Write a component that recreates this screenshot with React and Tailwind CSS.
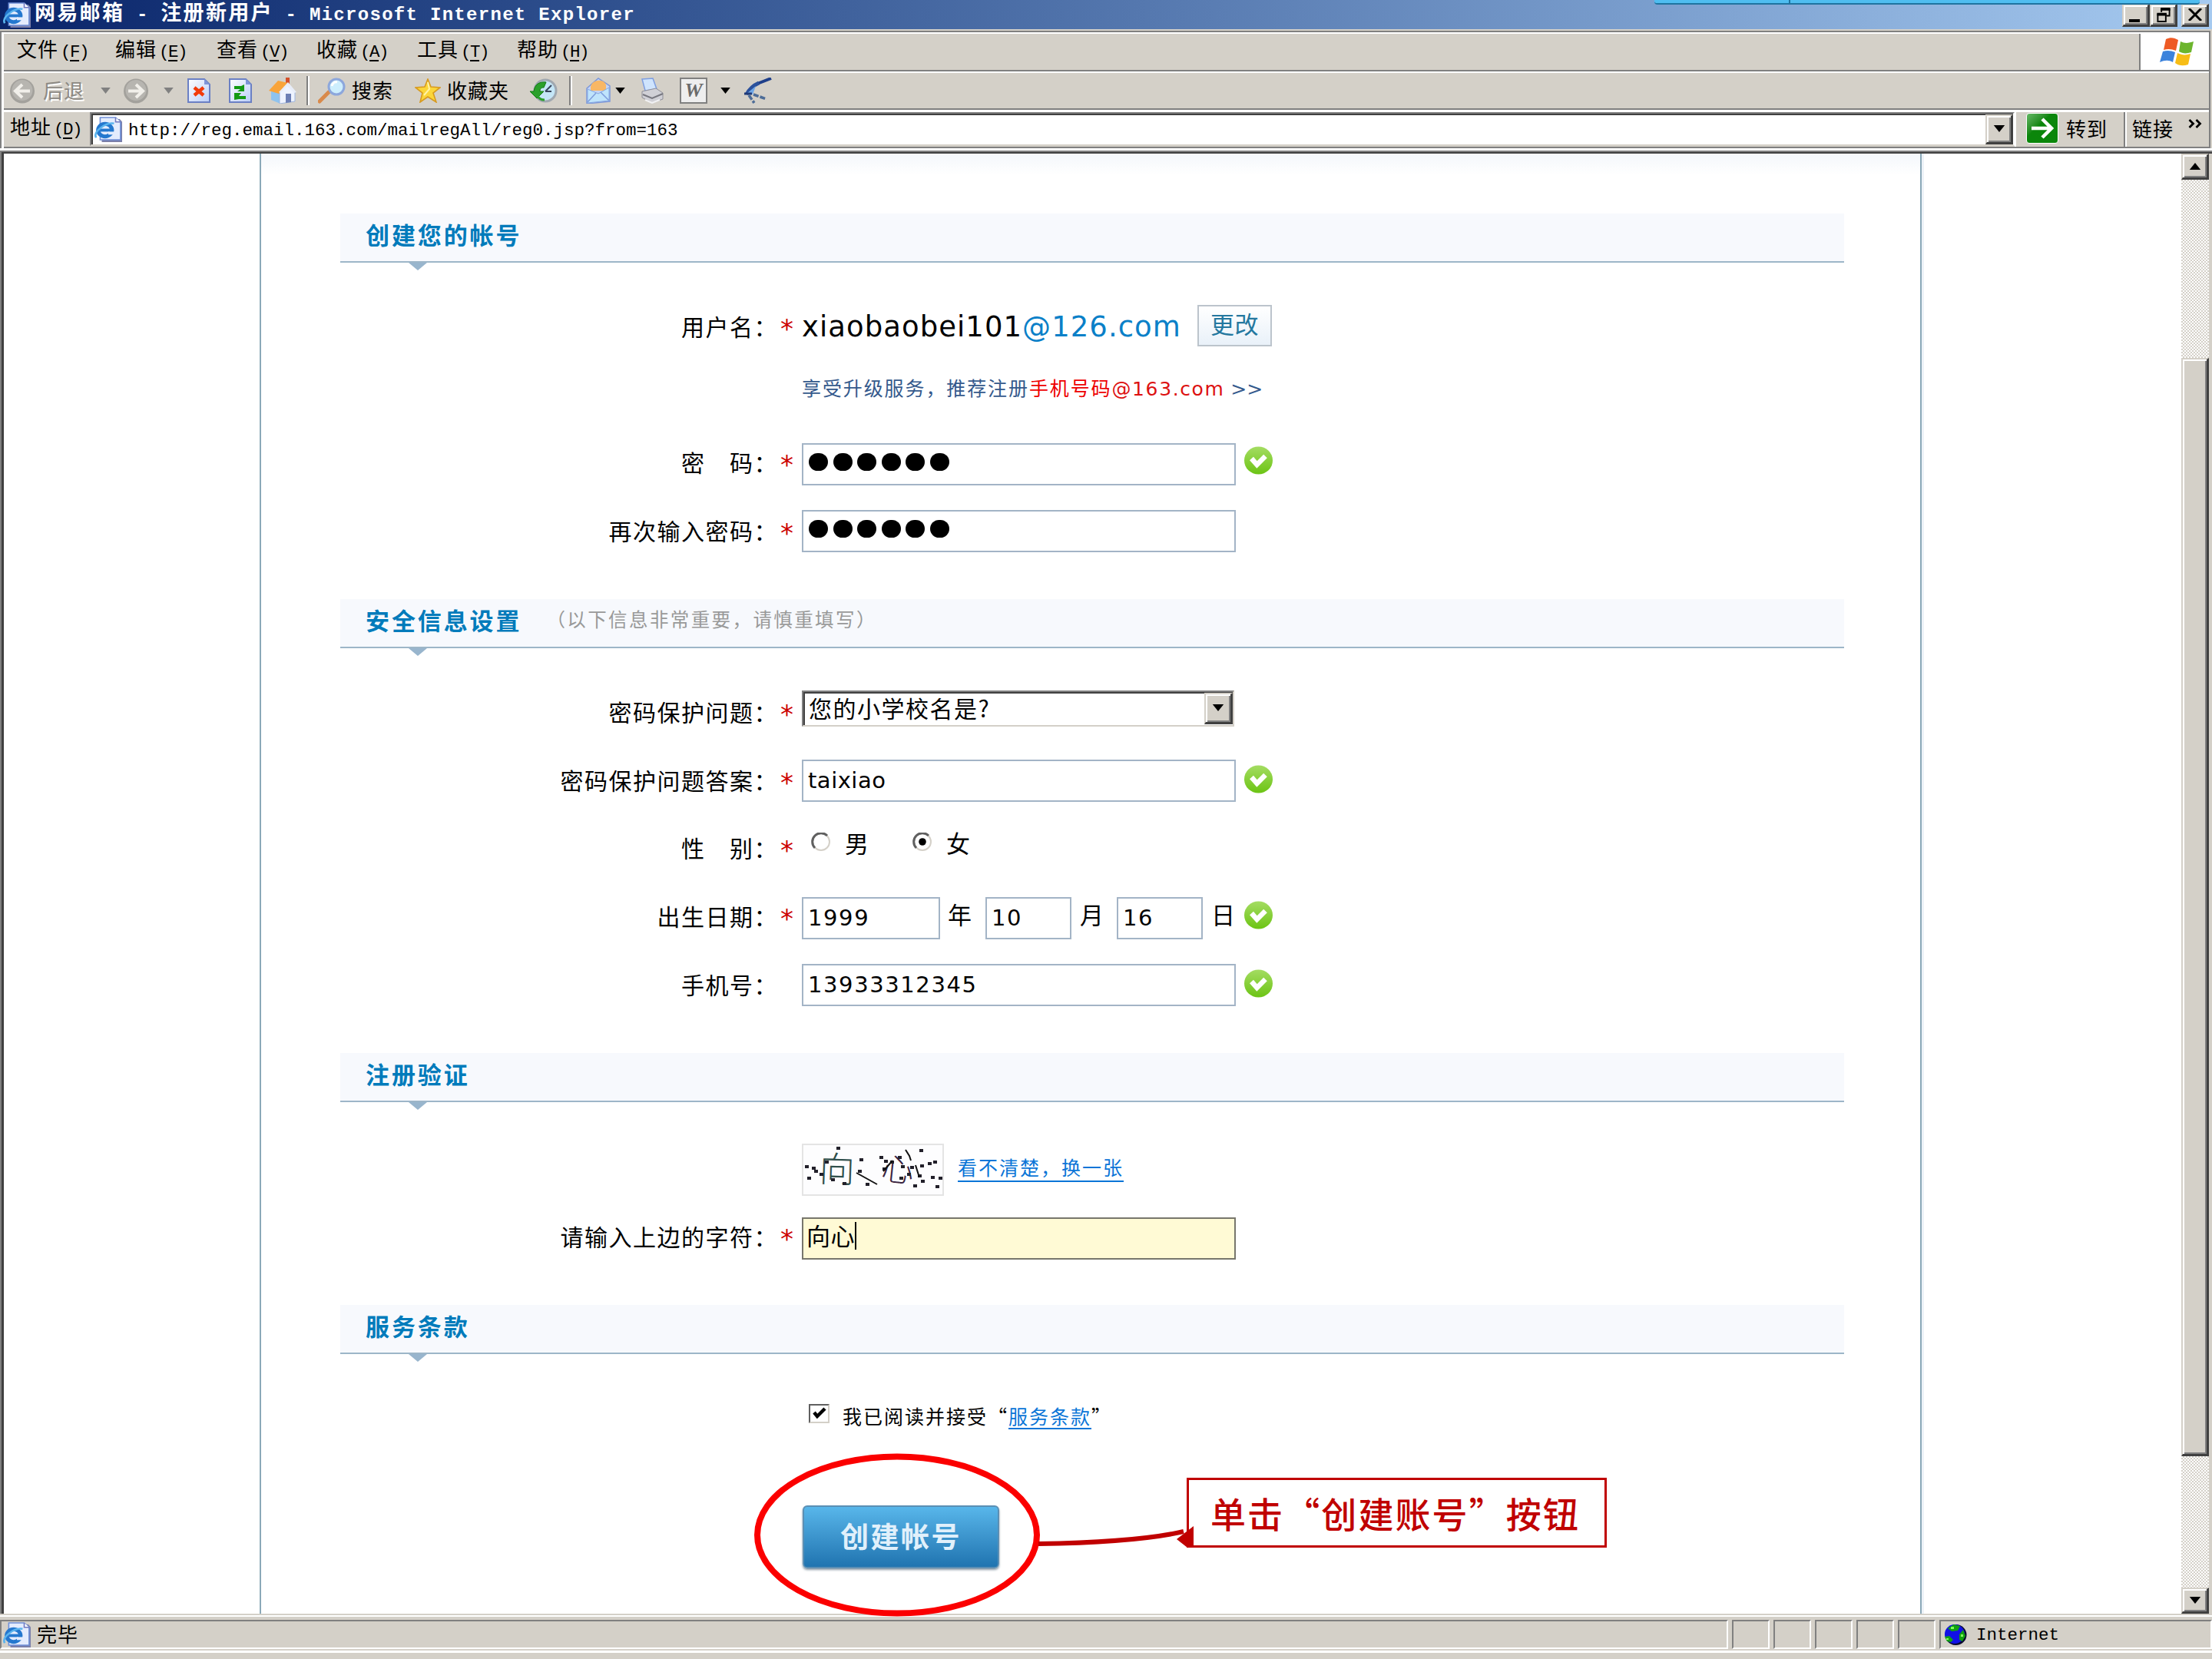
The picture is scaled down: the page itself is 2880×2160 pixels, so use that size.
import React from 'react';

const MONO = "font-['Liberation_Mono','Noto_Sans_CJK_SC',monospace]";
const CJK = "font-['Noto_Sans_CJK_SC',sans-serif]";
const VERDANA = "font-['DejaVu_Sans','Noto_Sans_CJK_SC',sans-serif]";

const MENUS = [
  { name: '文件', key: 'F', width: 'w-[128px]' },
  { name: '编辑', key: 'E', width: 'w-[132px]' },
  { name: '查看', key: 'V', width: 'w-[130px]' },
  { name: '收藏', key: 'A', width: 'w-[131px]' },
  { name: '工具', key: 'T', width: 'w-[130px]' },
  { name: '帮助', key: 'H', width: 'w-[130px]' },
];

const IEIcon = ({ className = 'w-[34px] h-[34px]' }) => (
  <svg viewBox="0 0 34 34" preserveAspectRatio="none" className={`shrink-0 ${className}`}>
    <path d="M9 3h22l4 5v26H9z" fill="#7b7fa8" />
    <path d="M7 1h19l6 6v24H7z" fill="#e4ecfd" stroke="#6f8fd8" strokeWidth="1.5" />
    <path d="M26 1v6h6" fill="#fff" stroke="#6f78c0" strokeWidth="1.5" />
    <circle cx="13" cy="18" r="8.5" fill="none" stroke="#2478cf" strokeWidth="5" />
    <path d="M7 18h15" stroke="#2478cf" strokeWidth="4" />
    <path d="M17 20h8v4h-8z" fill="#e4ecfd" />
    <path d="M2 28C-2 20 14 7 24 9" fill="none" stroke="#5ab4ee" strokeWidth="2.5" />
  </svg>
);

const RoundArrow = ({ flip }) => (
  <svg viewBox="0 0 34 33" className={`w-[34px] h-[33px] shrink-0 ${flip ? '-scale-x-100' : ''}`}>
    <circle cx="17" cy="16.5" r="16" fill="#a3a19c" />
    <circle cx="17" cy="15.5" r="13.5" fill="#b7b5b0" />
    <path d="M27 16.5H9M17 8l-9 8.5 9 8.5" fill="none" stroke="#f1efea" strokeWidth="4" />
  </svg>
);

const Caret = ({ className }) => (
  <svg viewBox="0 0 14 9" className={`w-[13px] h-[8px] shrink-0 ${className}`}>
    <path d="M0 0h14L7 9z" fill="currentColor" />
  </svg>
);

const PageSheet = ({ children }) => (
  <svg viewBox="0 0 30 32" className="w-[30px] h-[32px] shrink-0">
    <defs>
      <linearGradient id="sheet" x1="0" y1="0" x2="1" y2="1">
        <stop offset="0" stopColor="#ffffff" />
        <stop offset="1" stopColor="#b9cdf8" />
      </linearGradient>
    </defs>
    <path d="M1 1h21l7 7v23H1z" fill="url(#sheet)" stroke="#6b80c4" strokeWidth="2" />
    <path d="M22 1v7h7z" fill="#7f95d8" />
    {children}
  </svg>
);

const HomeIcon = () => (
  <svg viewBox="0 0 36 34" className="w-[36px] h-[34px] shrink-0 ml-[22px]">
    <path d="M3 18v11l12 5V18z" fill="#8fc3ee" />
    <path d="M14 20l10-10 10 9v12l-20 3z" fill="#eef3ff" stroke="#9db4dd" />
    <path d="M22 21h7v11l-7 1z" fill="#6d7fb5" />
    <path d="M22 0h5v9h-5z" fill="#d4502a" />
    <path d="M0 17L12 4l13 3-12 14z" fill="#f9a43a" />
    <path d="M25 6l11 13-3 1-9-9-9 9-2-1z" fill="#e8edf8" />
  </svg>
);

const SearchIcon = () => (
  <svg viewBox="0 0 36 34" className="w-[36px] h-[34px] shrink-0 ml-[11px]">
    <path d="M2 31l12-12" stroke="#d98a4b" strokeWidth="5" strokeLinecap="round" />
    <circle cx="24" cy="12" r="10" fill="#cdeefd" stroke="#8da7dc" strokeWidth="3" />
    <path d="M18 11c1-4 4-6 7-5" fill="none" stroke="#fff" strokeWidth="3" />
  </svg>
);

const StarIcon = () => (
  <svg viewBox="0 0 34 32" className="w-[34px] h-[32px] shrink-0 ml-[26px]">
    <path
      d="M17 1l4 10 12 1-9 7 4 12-11-7-10 7 3-12-9-7 12-1z"
      fill="#fbd63a"
      stroke="#d79a20"
      strokeWidth="1.6"
    />
    <path d="M17 5l2 9-7 8" fill="none" stroke="#fff3a8" strokeWidth="2" />
  </svg>
);

const HistoryIcon = () => (
  <svg viewBox="0 0 36 32" className="w-[36px] h-[32px] shrink-0 ml-[26px]">
    <circle cx="20" cy="16" r="14" fill="#c4e6f7" stroke="#a0a8b0" strokeWidth="3" />
    <path d="M20 17l8-8M20 17h8" stroke="#39455c" strokeWidth="2" />
    <path d="M0 17h5C6 8 12 4 21 5l-3 7c-4 0-5 2-5 5h5l-9 9z" fill="#2ba02b" stroke="#137a13" />
    <path d="M10 23c2 4 5 5 9 5" fill="none" stroke="#2ba02b" strokeWidth="3" />
  </svg>
);

const MailIcon = () => (
  <svg viewBox="0 0 32 34" className="w-[32px] h-[34px] shrink-0 ml-[18px]">
    <path d="M1 14L16 1l15 10v20L1 34z" fill="#c4d3f4" stroke="#7e98d8" strokeWidth="1.5" />
    <path d="M6 12c2-10 18-11 20-2v7H6z" fill="#f8b765" />
    <path d="M2 15l14 6 14-8v17L2 33z" fill="#bfe4fc" stroke="#86a9e2" />
    <path d="M2 32l11-12M30 30L19 19" stroke="#7f9ddc" strokeWidth="1.5" />
  </svg>
);

const PrinterIcon = () => (
  <svg viewBox="0 0 32 34" className="w-[32px] h-[34px] shrink-0 ml-[19px]">
    <path d="M3 2l14-1 5 14-15 2z" fill="#cfe4fd" stroke="#7e9ee0" strokeWidth="1.5" />
    <path d="M3 18l18-4 9 6v8l-14 5-13-7z" fill="#d0d0d6" stroke="#8f8f98" />
    <path d="M4 22l12 5 14-6" fill="none" stroke="#77777f" strokeWidth="2" />
    <path d="M7 29l9 4 10-4" fill="none" stroke="#f2f2f4" strokeWidth="2" />
  </svg>
);

const DiscussIcon = () => (
  <svg viewBox="0 0 38 34" className="w-[38px] h-[34px] shrink-0 ml-[16px]">
    <path d="M37 1L19 8" stroke="#1f3f8a" strokeWidth="4" />
    <path d="M21 7C12 11 8 16 5 22" fill="none" stroke="#2b519c" strokeWidth="5" />
    <path d="M17 11L5 21l8 1z" fill="#6fa6e6" />
    <path d="M2 21h10" stroke="#1f3a78" strokeWidth="3" />
    <path d="M8 23l7 10M14 22l17 6" stroke="#4d6c97" strokeWidth="3.500" strokeDasharray="7 2" />
  </svg>
);

const WindowsFlag = () => (
  <svg viewBox="0 0 46 38" className="w-[46px] h-[38px]">
    <path d="M9 2c6-3 11-2 16 1l-3 14c-5-2-10-3-16-1z" fill="#ee5a24" />
    <path d="M28 5c6 3 11 2 17 0l-3 14c-6 2-11 2-16-1z" fill="#6cb52d" />
    <path d="M5 18c6-2 11-1 16 1l-3 13c-5-3-10-3-17 0z" fill="#3c83dc" />
    <path d="M24 20c6 3 11 3 17 1l-3 14c-6 2-12 2-17-2z" fill="#f7bd16" />
  </svg>
);

const Globe = () => (
  <svg viewBox="0 0 30 28" className="w-[30px] h-[28px] shrink-0">
    <ellipse cx="15.500" cy="14.500" rx="14" ry="13.500" fill="#0a0a30" />
    <ellipse cx="14" cy="13.500" rx="13" ry="12.500" fill="#1111e6" />
    <path d="M5 6l8-5 8 2-3 6-8 1zM20 14l5-6 3 8-4 7-4-2zM1 17l6-1 5 5-3 3-5-1z" fill="#11a011" />
    <path d="M9 4h4v3H9zM22 14h3v3h-3zM3 19h3v2H3z" fill="#7dff5a" />
  </svg>
);

const OkIcon = ({ className = '' }) => (
  <svg viewBox="0 0 38 37" className={`w-[39px] h-[37px] shrink-0 ${className}`}>
    <defs>
      <linearGradient id="ok" x1="0" y1="0" x2="0" y2="1">
        <stop offset="0" stopColor="#a4dc62" />
        <stop offset="1" stopColor="#6cc414" />
      </linearGradient>
    </defs>
    <ellipse cx="19" cy="18.500" rx="18.500" ry="18" fill="url(#ok)" />
    <path d="M10 16l7 8 11-11" fill="none" stroke="#fff" strokeWidth="6.500" />
  </svg>
);

// raised 3D button face of the classic Windows theme
const Raised = ({ className, children }) => (
  <div
    className={`flex items-center justify-center shrink-0 bg-[#d4d0c8] border-t-2 border-l-2 border-r-[3px] border-b-[3px] border-t-[#d4d0c8] border-l-[#d4d0c8] border-r-[#404040] border-b-[#404040] shadow-[inset_2px_2px_0_#fff,inset_-2px_-2px_0_#808080] ${className}`}
  >
    {children}
  </div>
);

const ToolSeparator = ({ className }) => (
  <div className={`w-[4px] h-[38px] shrink-0 border-l-2 border-[#808080] bg-white ${className}`} />
);

const TitleBar = () => (
  <div className="relative flex h-[38px] items-center bg-linear-to-r from-[#0a246a] to-[#a6caf0]">
    <IEIcon className="w-[36px] h-[33px] ml-1" />
    <div
      className={`${MONO} ml-[5px] flex items-baseline whitespace-pre text-[24px] leading-[38px] font-bold text-white`}
    >
      <span className="text-[27px] tracking-[2.3px]">网易邮箱</span>
      <span className="tracking-[1.3px]"> - </span>
      <span className="text-[27px] tracking-[2.3px]">注册新用户</span>
      <span className="tracking-[1.3px]"> - Microsoft Internet Explorer</span>
    </div>
    <div className="ml-auto flex pt-[1px] pr-[4px]">
      <Raised className="w-[36px] h-[30px]">
        <div className="mt-[16px] mr-1 h-[4px] w-[14px] bg-black" />
      </Raised>
      <Raised className="w-[36px] h-[30px]">
        <svg viewBox="0 0 18 20" className="h-[19px] w-[18px]">
          <path d="M6 6V2h11v9h-4" fill="none" stroke="#000" strokeWidth="2" />
          <path d="M5 2h13M0 9h13" stroke="#000" strokeWidth="4" />
          <path d="M1 9h11v10H1z" fill="none" stroke="#000" strokeWidth="2" />
        </svg>
      </Raised>
      <Raised className="ml-[5px] w-[36px] h-[30px]">
        <svg viewBox="0 0 18 16" className="h-[16px] w-[18px]">
          <path d="M1 0l16 16M17 0L1 16" stroke="#000" strokeWidth="3" />
        </svg>
      </Raised>
    </div>
    <div className="absolute top-0 left-[2154px] flex h-[6px] w-[710px] rounded-b-sm border-b-2 border-[#1f74a0] bg-[#4fbdf0]">
      <div className="w-[177px] border-r-2 border-[#1f74a0]" />
    </div>
  </div>
);

const MenuBar = () => (
  <div className="flex h-[49px] border-b-2 border-[#808080] pl-[17px]">
    <div className="flex items-center pb-[2px]">
      {MENUS.map((menu) => (
        <div key={menu.key} className={`${MONO} ${menu.width} flex items-baseline text-[22.5px] leading-none`}>
          <span className="text-[26px] tracking-[1px]">{menu.name}</span>
          <span className="ml-[3px] tracking-[-1.500px]">
            (<span className="underline decoration-2 underline-offset-4">{menu.key}</span>)
          </span>
        </div>
      ))}
    </div>
    <div className="ml-auto flex w-[91px] items-center justify-center border-l-2 border-[#808080] bg-white pl-1">
      <WindowsFlag />
    </div>
  </div>
);

const ToolBar = () => (
  <div className={`${CJK} flex h-[50px] items-center border-t-2 border-b-2 border-t-white border-b-[#808080] pl-[7px] text-[26px] leading-none tracking-[1px]`}>
    <RoundArrow />
    <span className="ml-[10px] w-[54px] shrink-0 pb-[2px] text-[#8d8a84] [text-shadow:2px_2px_0_#fff]">后退</span>
    <Caret className="ml-[21px] text-[#808080]" />
    <div className="ml-[16px] flex"><RoundArrow flip /></div>
    <Caret className="ml-[19px] text-[#808080]" />
    <div className="ml-[18px] flex">
      <PageSheet>
        <path d="M9 12l12 10M21 12L9 22" stroke="#f23a0a" strokeWidth="4.500" />
      </PageSheet>
    </div>
    <div className="ml-[24px] flex">
      <PageSheet>
        <path d="M7 10h9l4-2v9h-9l4-3H7zM22 27h-9l-6 1v-9h9l-3 4h9z" fill="#139a13" />
      </PageSheet>
    </div>
    <HomeIcon />
    <ToolSeparator className="ml-[13px]" />
    <SearchIcon />
    <span className="ml-[8px] w-[56px] shrink-0 pb-[2px]">搜索</span>
    <StarIcon />
    <span className="ml-[8px] w-[82px] shrink-0 pb-[2px]">收藏夹</span>
    <HistoryIcon />
    <ToolSeparator className="ml-[15px]" />
    <MailIcon />
    <Caret className="ml-[6px] text-black" />
    <PrinterIcon />
    <div className="ml-[20px] flex h-[34px] w-[36px] shrink-0 items-center justify-center border-2 border-[#808080] bg-[#eeeeee] font-['Liberation_Serif',serif] text-[26px] font-bold tracking-normal text-[#6a6a6a] italic">
      W
    </div>
    <Caret className="ml-[17px] text-black" />
    <DiscussIcon />
  </div>
);

const AddressBar = () => (
  <div className="flex h-[50px] border-t-[3px] border-b-2 border-t-white border-b-[#808080]">
    <div className={`${MONO} flex w-[112px] shrink-0 items-baseline pl-[8px] pt-[7px] text-[22.5px] leading-[30px]`}>
      <span className="text-[26px] tracking-[1px]">地址</span>
      <span className="ml-[3px] tracking-[-1.500px]">
        (<span className="underline decoration-2 underline-offset-4">D</span>)
      </span>
    </div>
    <div className="flex h-[44px] flex-1 items-center border-2 border-[#808080] border-r-[#fff] border-b-[#d4d0c8] bg-white shadow-[inset_2px_2px_0_#404040]">
      <IEIcon className="ml-[4px] w-[36px] h-[33px]" />
      <span className={`${MONO} ml-[8px] pt-[6px] text-[22.5px]`}>
        http://reg.email.163.com/mailregAll/reg0.jsp?from=163
      </span>
      <Raised className="ml-auto h-[39px] w-[36px]">
        <svg viewBox="0 0 16 10" className="h-[9px] w-[16px]">
          <path d="M0 0h16L8 10z" />
        </svg>
      </Raised>
    </div>
    <div className={`${CJK} flex w-[253px] shrink-0 items-center border-l-2 border-white pb-1 text-[26px] leading-none tracking-[1px]`}>
      <div className="ml-[13px] flex h-[40px] w-[42px] items-center justify-center rounded-sm border border-white bg-linear-to-br from-[#63b863] to-[#0b860b] to-40%">
        <svg viewBox="0 0 30 28" className="h-[28px] w-[30px]">
          <path d="M1 14h26M15 2l12 12-12 12" fill="none" stroke="#fff" strokeWidth="4.500" />
        </svg>
      </div>
      <span className="ml-[10px]">转到</span>
      <div className="ml-auto mt-1 h-[45px] w-[4px] border-l-2 border-[#808080] bg-white" />
      <span className="ml-[7px]">链接</span>
      <svg viewBox="0 0 17 12" className="mr-[9px] mb-[12px] ml-[19px] h-[12px] w-[18px]">
        <path d="M1 1l5 5-5 5M10 1l5 5-5 5" fill="none" stroke="#000" strokeWidth="2.800" />
      </svg>
    </div>
  </div>
);

const SectionHeader = ({ title, note, className }) => (
  <div className={className}>
    <div className={`${CJK} flex h-[64px] items-center border-b-2 border-[#9db6c8] bg-[#f7f9fd] pb-[9px] pl-[33px]`}>
      <h2 className="text-[31px] leading-none font-bold tracking-[2.9px] text-[#007bbb]">{title}</h2>
      {note && (
        <span className="ml-[32px] text-[24.5px] leading-none tracking-[2.4px] text-[#999]">{note}</span>
      )}
    </div>
    <svg viewBox="0 0 24 10" preserveAspectRatio="none" className="ml-[89px] h-[10px] w-[24px]">
      <path d="M0 0h24L12 10z" fill="#98b5cd" />
    </svg>
  </div>
);

const Row = ({ label, required, className = '', children }) => (
  <div className={`flex h-[88px] items-center ${className}`}>
    <div className={`${CJK} w-[570px] shrink-0 pb-[6px] text-right text-[30px] leading-none tracking-[1.5px] whitespace-pre`}>
      {label}
    </div>
    <div className={`${VERDANA} w-[31px] shrink-0 pt-[2px] pl-[3px] text-[34px] leading-none text-[#cc0000]`}>
      {required && '*'}
    </div>
    {children}
  </div>
);

const Field = ({ className, children }) => (
  <div
    className={`${VERDANA} flex h-[55px] shrink-0 items-center border-2 border-[#a3b4c6] bg-white pl-[6px] text-[29px] leading-none ${className}`}
  >
    {children}
  </div>
);

const PasswordDots = () => (
  <div className="mb-[6px] flex gap-[6.600px] pl-[1px]">
    {[0, 1, 2, 3, 4, 5].map((i) => (
      <span key={i} className="h-[23px] w-[25px] rounded-full bg-black" />
    ))}
  </div>
);

const Radio = ({ checked, className }) => (
  <svg viewBox="0 0 26 24" className={`h-[24px] w-[26px] shrink-0 ${className}`}>
    <circle cx="13" cy="12" r="11" fill="#fff" stroke="#d4d0c8" strokeWidth="2" />
    <path d="M5 20A11 11 0 0 1 21 4" fill="none" stroke="#606060" strokeWidth="3" />
    {checked && <circle cx="13" cy="12" r="4.800" />}
  </svg>
);

const NOISE = [
  [4, 28], [13, 30], [16, 34], [7, 43], [23, 38], [30, 22], [45, 4], [75, 19], [73, 34],
  [101, 16], [107, 21], [105, 31], [115, 22], [125, 16], [129, 28], [127, 43], [137, 38], [141, 29],
  [153, 7], [154, 27], [164, 24], [171, 22], [151, 40], [168, 42], [178, 43], [155, 47], [174, 54],
  [145, 53], [83, 51], [53, 50], [38, 45],
];

const Captcha = () => (
  <svg viewBox="0 0 185 68" className="h-[68px] w-[185px] shrink-0">
    <rect x="1" y="1" width="183" height="66" fill="#fdfdfe" stroke="#e4e4e4" strokeWidth="2" />
    <g className={CJK} fontWeight="300">
      <text x="23" y="50" fontSize="46" fill="#2f4f4b" transform="rotate(2 45 30)">向</text>
      <text x="104" y="49" fontSize="42" fill="#3a2440" transform="rotate(6 125 34)">心</text>
    </g>
    {NOISE.map(([x, y]) => (
      <rect key={`${x}-${y}`} x={x} y={y} width="5" height="4" fill="#22202a" />
    ))}
    <path d="M71 38l27 15M135 8l5 8 2 6M148 28l5 16M106 36l12-14" fill="none" stroke="#111" strokeWidth="2" />
  </svg>
);

const SignUpForm = () => (
  <div className="relative flex h-[1901px] w-[2164px] flex-col overflow-hidden border-r-2 border-l-2 border-[#8ba9b8] bg-[linear-gradient(#f4f7fb,#ffffff_28px)] pr-[99px] pl-[103px]">
    <SectionHeader title="创建您的帐号" className="mt-[78px] h-[74px]" />
    <Row label="用户名：" required className="mt-[31px]">
      <div className={`${VERDANA} w-[515px] shrink-0 pb-[4px] text-[37px] leading-none tracking-[1.05px] whitespace-nowrap`}>
        xiaobaobei101<span className="text-[#0a80c8]">@126.com</span>
      </div>
      <button
        className={`${CJK} mb-[6px] h-[54px] w-[97px] border-2 border-[#bcc4cc] bg-linear-to-b from-white to-[#e9f1f9] pb-[8px] text-[31px] leading-none tracking-[0.5px] text-[#24789f]`}
      >
        更改
      </button>
    </Row>
    <div className={`${VERDANA} flex h-[70px] items-center pl-[601px] text-[25px] leading-none tracking-[1.9px] whitespace-pre text-[#34598c]`}>
      享受升级服务，推荐注册
      <span className="text-[#ee0000]">手机号码<span className="tracking-[1.6px] text-[#dd1111]">@163.com</span></span>
      <span className="tracking-normal"> &gt;&gt;</span>
    </div>
    <Row label="密　码：" required className="mt-[19px]">
      <Field className="w-[565px]"><PasswordDots /></Field>
      <OkIcon className="mb-[10px] ml-[10px]" />
    </Row>
    <Row label="再次输入密码：" required className="mt-[1px]">
      <Field className="mb-[3px] w-[565px]"><PasswordDots /></Field>
    </Row>

    <SectionHeader title="安全信息设置" note="（以下信息非常重要，请慎重填写）" className="mt-[43px] h-[74px]" />
    <Row label="密码保护问题：" required className="mt-[31px]">
      <div className={`${CJK} mb-[14px] flex h-[47px] w-[563px] shrink-0 items-center justify-between border-2 border-[#808080] border-r-[#d4d0c8] border-b-[#d4d0c8] bg-white pl-[7px] text-[30px] leading-none tracking-[1.5px] shadow-[inset_2px_2px_0_#404040]`}>
        <span className="pb-[2px]">您的小学校名是?</span>
        <Raised className="h-[41px] w-[37px]">
          <svg viewBox="0 0 16 10" className="h-[9px] w-[16px]">
            <path d="M0 0h16L8 10z" />
          </svg>
        </Raised>
      </div>
    </Row>
    <Row label="密码保护问题答案：" required className="mt-[1px]">
      <Field className="mb-[3px] w-[565px]"><span className="tracking-[0.5px]">taixiao</span></Field>
      <OkIcon className="mb-[8px] ml-[10px]" />
    </Row>
    <Row label="性　别：" required>
      <div className={`${CJK} flex items-center pb-[20px] text-[31px] leading-none`}>
        <Radio className="ml-[12px]" />
        <span className="ml-[18px] w-[31px]">男</span>
        <Radio checked className="ml-[57px]" />
        <span className="ml-[18px]">女</span>
      </div>
    </Row>
    <Row label="出生日期：" required className="mt-[1px]">
      <Field className="w-[180px]"><span className="tracking-[1.6px]">1999</span></Field>
      <span className={`${CJK} ml-[10px] w-[49px] pb-[12px] text-[31px] leading-none`}>年</span>
      <Field className="w-[112px]"><span className="tracking-[1.6px]">10</span></Field>
      <span className={`${CJK} ml-[11px] w-[48px] pb-[12px] text-[31px] leading-none`}>月</span>
      <Field className="w-[112px]"><span className="tracking-[1.6px]">16</span></Field>
      <span className={`${CJK} ml-[11px] w-[42px] pb-[12px] text-[31px] leading-none`}>日</span>
      <OkIcon className="mb-[8px]" />
    </Row>
    <Row label="手机号：" className="mt-[1px]">
      <Field className="mb-[3px] w-[565px]"><span className="tracking-[1.6px]">13933312345</span></Field>
      <OkIcon className="mb-[8px] ml-[10px]" />
    </Row>

    <SectionHeader title="注册验证" className="mt-[43px] h-[74px]" />
    <div className="mt-[44px] flex h-[68px] items-center pl-[601px]">
      <Captcha />
      <a className={`${CJK} mb-[4px] ml-[18px] border-b-2 border-[#0a75d7] pb-[3px] text-[25px] leading-[30px] tracking-[2px] text-[#0a75d7]`}>
        看不清楚，换一张
      </a>
    </div>
    <Row label="请输入上边的字符：" required className="mt-[11px]">
      <div className={`${CJK} flex h-[55px] w-[565px] shrink-0 items-center border-2 border-[#77766c] bg-[#fffad5] pb-[10px] pl-[4px] text-[31px] leading-none tracking-[0.5px]`}>
        向心
        <div className="mt-[4px] h-[36px] w-[2px] bg-black" />
      </div>
    </Row>

    <SectionHeader title="服务条款" className="mt-[43px] h-[74px]" />
    <div className={`${CJK} mt-[46px] flex h-[48px] items-center pl-[610px] text-[25px] leading-none tracking-[2px]`}>
      <div className="mb-[6px] flex h-[25px] w-[27px] items-center justify-center border-2 border-[#606060] border-r-[#d4d0c8] border-b-[#d4d0c8] bg-white">
        <svg viewBox="0 0 18 16" className="h-[16px] w-[18px]">
          <path d="M2 7l4 5L16 2" fill="none" stroke="#000" strokeWidth="4.500" />
        </svg>
      </div>
      <span className="ml-[17px]">我已阅读并接受“</span>
      <a className="mt-[5px] border-b-2 border-[#0a75d7] pb-[3px] text-[#0a75d7]">服务条款</a>
      <span>”</span>
    </div>
    <button
      className={`${CJK} mt-[93px] ml-[602px] h-[82px] w-[256px] shrink-0 rounded-md border-2 border-[#5b8fb4] bg-linear-to-b from-[#58b6ea] to-[#1f74b0] pb-[4px] text-[37px] leading-none font-bold tracking-[2.5px] text-[#e0f0fb] shadow-[0_2px_3px_#8a9aa6]`}
    >
      创建帐号
    </button>
  </div>
);

const ScrollBar = () => (
  <div className="flex w-[36px] shrink-0 flex-col bg-[repeating-conic-gradient(#d4d0c8_0_25%,#fff_0_50%)] bg-[length:4px_4px]">
    <Raised className="h-[34px] w-[36px]">
      <svg viewBox="0 0 16 10" className="h-[9px] w-[16px]">
        <path d="M0 10h16L8 0z" />
      </svg>
    </Raised>
    <Raised className="mt-[232px] h-[1430px] w-[36px]" />
    <Raised className="mt-auto h-[34px] w-[36px]">
      <svg viewBox="0 0 16 10" className="h-[9px] w-[16px]">
        <path d="M0 0h16L8 10z" />
      </svg>
    </Raised>
  </div>
);

const StatusCell = ({ className, children }) => (
  <div className={`flex h-[38px] items-center border-2 border-t-[#808080] border-l-[#808080] border-r-white border-b-white ${className}`}>
    {children}
  </div>
);

const StatusBar = () => (
  <div className="bg-[#d4d0c8]">
    <div className="flex h-[46px] gap-[5px] border-b-2 border-[#d4d0c8] pt-[8px] shadow-[inset_0_2px_0_#d4d0c8,inset_0_4px_0_#fff]">
      <StatusCell className="w-[2250px]">
        <IEIcon className="ml-[2px] w-[36px] h-[33px]" />
        <span className={`${CJK} ml-[8px] pb-[2px] text-[26px] leading-none tracking-[1px]`}>完毕</span>
      </StatusCell>
      <StatusCell className="w-[49px]" />
      <StatusCell className="w-[49px]" />
      <StatusCell className="w-[49px]" />
      <StatusCell className="w-[49px]" />
      <StatusCell className="w-[49px]" />
      <StatusCell className="flex-1">
        <div className="ml-[4px] flex"><Globe /></div>
        <span className={`${MONO} ml-[12px] pt-[2px] text-[22.5px] leading-none`}>Internet</span>
      </StatusCell>
    </div>
    <div className="h-[5px] border-t-2 border-[#d4d0c8] bg-white" />
    <div className="h-[8px]" />
  </div>
);

// red ring, connector and call-out drawn over the page
const Annotation = () => (
  <>
    <svg viewBox="0 0 600 230" className="absolute top-[1884px] left-[970px] h-[230px] w-[600px]">
      <ellipse cx="198" cy="114.500" rx="182" ry="102" fill="none" stroke="#fb0000" strokeWidth="8" />
      <path d="M382 126Q510 124 571 110" fill="none" stroke="#c00000" strokeWidth="6" />
    </svg>
    <div
      lang="zh-CN"
      className={`${CJK} absolute top-[1924px] left-[1545px] flex h-[91px] w-[547px] items-center border-[3px] border-[#c00000] bg-white pb-[1px] pl-[28px] text-[46px] leading-none font-medium tracking-[2.1px] whitespace-nowrap text-[#c00000]`}
    >
      单击“创建账号”按钮
    </div>
    <svg viewBox="0 0 22 28" className="absolute top-[1987px] left-[1532px] h-[28px] w-[22px]">
      <path d="M0 17L22 0v28H14z" fill="#c00000" />
    </svg>
  </>
);

const App = () => {
  return (
    <div lang="zh-CN" className="relative flex h-[2160px] w-[2880px] flex-col overflow-hidden bg-[#d4d0c8] text-black">
      <TitleBar />
      <div className="mt-[2px] mr-[2px] border-t-2 border-r-2 border-l-2 border-[#808080]">
        <div className="border-t-2 border-l-[3px] border-white">
          <MenuBar />
          <ToolBar />
          <AddressBar />
        </div>
      </div>
      <div className="h-[3px] shrink-0 bg-white" />
      <div className="flex h-[1905px] shrink-0 border-t-2 border-l-2 border-[#808080]">
        <div className="flex flex-1 border-t-2 border-l-[3px] border-[#404040] bg-white">
          <div className="flex flex-1 pl-[333px]">
            <SignUpForm />
            <div className="w-[3px] bg-[#edf2f8]" />
          </div>
          <ScrollBar />
          <div className="w-[4px] bg-[#d4d0c8]" />
        </div>
      </div>
      <StatusBar />
      <Annotation />
    </div>
  );
};

export default App;
